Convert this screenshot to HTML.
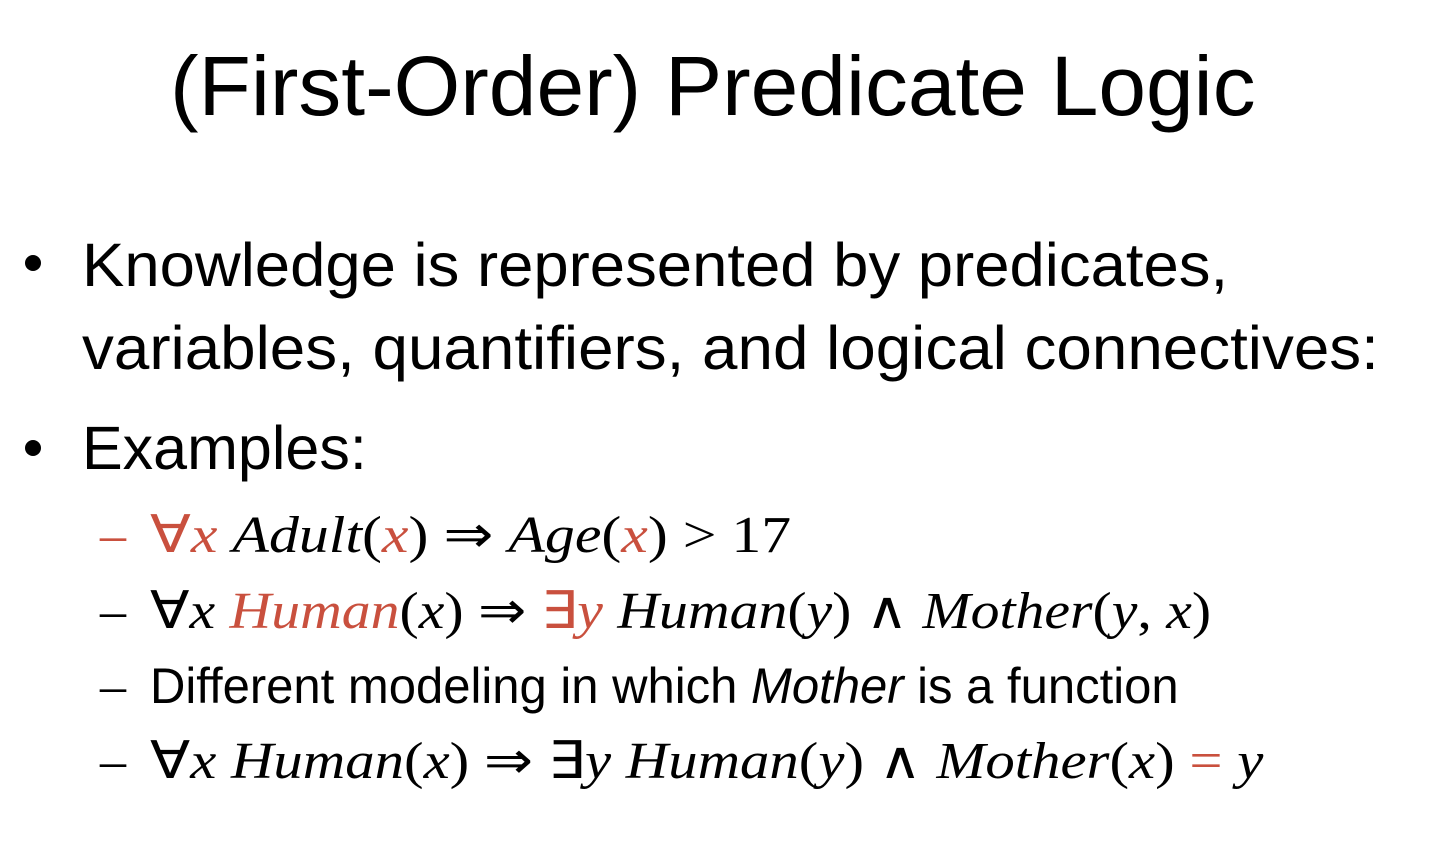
<!DOCTYPE html>
<html><head><meta charset="utf-8"><style>
html,body{margin:0;padding:0;background:#fff;width:1431px;height:858px;overflow:hidden}
.l{position:absolute;white-space:nowrap;line-height:1;transform-origin:0 0;color:#000}
.s{font-family:"Liberation Sans",sans-serif}
.m{font-family:"Liberation Serif",serif}
i{font-style:italic}
.r{color:#C9503E}
.b{position:absolute;width:16px;height:16px;border-radius:50%;background:#000}
</style></head><body>
<div class="l s" style="left:170px;top:44px;font-size:84px;transform:scaleX(1.02)">(First-Order) Predicate Logic</div>
<div class="b" style="left:25px;top:255px"></div>
<div class="l s" style="left:82px;top:235px;font-size:61px;transform:scaleX(1.04)">Knowledge is represented by predicates,</div>
<div class="l s" style="left:82px;top:318px;font-size:61px;transform:scaleX(1.045)">variables, quantifiers, and logical connectives:</div>
<div class="b" style="left:25px;top:440px"></div>
<div class="l s" style="left:82px;top:418px;font-size:61px;transform:scaleX(1.0)">Examples:</div>
<div class="l m" style="left:100px;top:510px;font-size:52px"><span class="r">–</span></div>
<div class="l m" style="left:150px;top:510px;font-size:52px;transform:scaleX(1.15)"><span class="r">∀<i>x</i></span> <i>Adult</i>(<i class="r">x</i>) ⇒ <i>Age</i>(<i class="r">x</i>) &gt; 17</div>
<div class="l m" style="left:100px;top:586px;font-size:52px">–</div>
<div class="l m" style="left:150px;top:586px;font-size:52px;transform:scaleX(1.11)">∀<i>x</i> <i class="r">Human</i>(<i>x</i>) ⇒ <span class="r">∃<i>y</i></span> <i>Human</i>(<i>y</i>) ∧ <i>Mother</i>(<i>y</i>, <i>x</i>)</div>
<div class="l m" style="left:100px;top:661px;font-size:52px">–</div>
<div class="l s" style="left:150px;top:661px;font-size:50px;transform:scaleX(0.98)">Different modeling in which <i>Mother</i> is a function</div>
<div class="l m" style="left:100px;top:736px;font-size:52px">–</div>
<div class="l m" style="left:150px;top:736px;font-size:52px;transform:scaleX(1.13)">∀<i>x</i> <i>Human</i>(<i>x</i>) ⇒ ∃<i>y</i> <i>Human</i>(<i>y</i>) ∧ <i>Mother</i>(<i>x</i>) <span class="r">=</span> <i>y</i></div>
</body></html>
